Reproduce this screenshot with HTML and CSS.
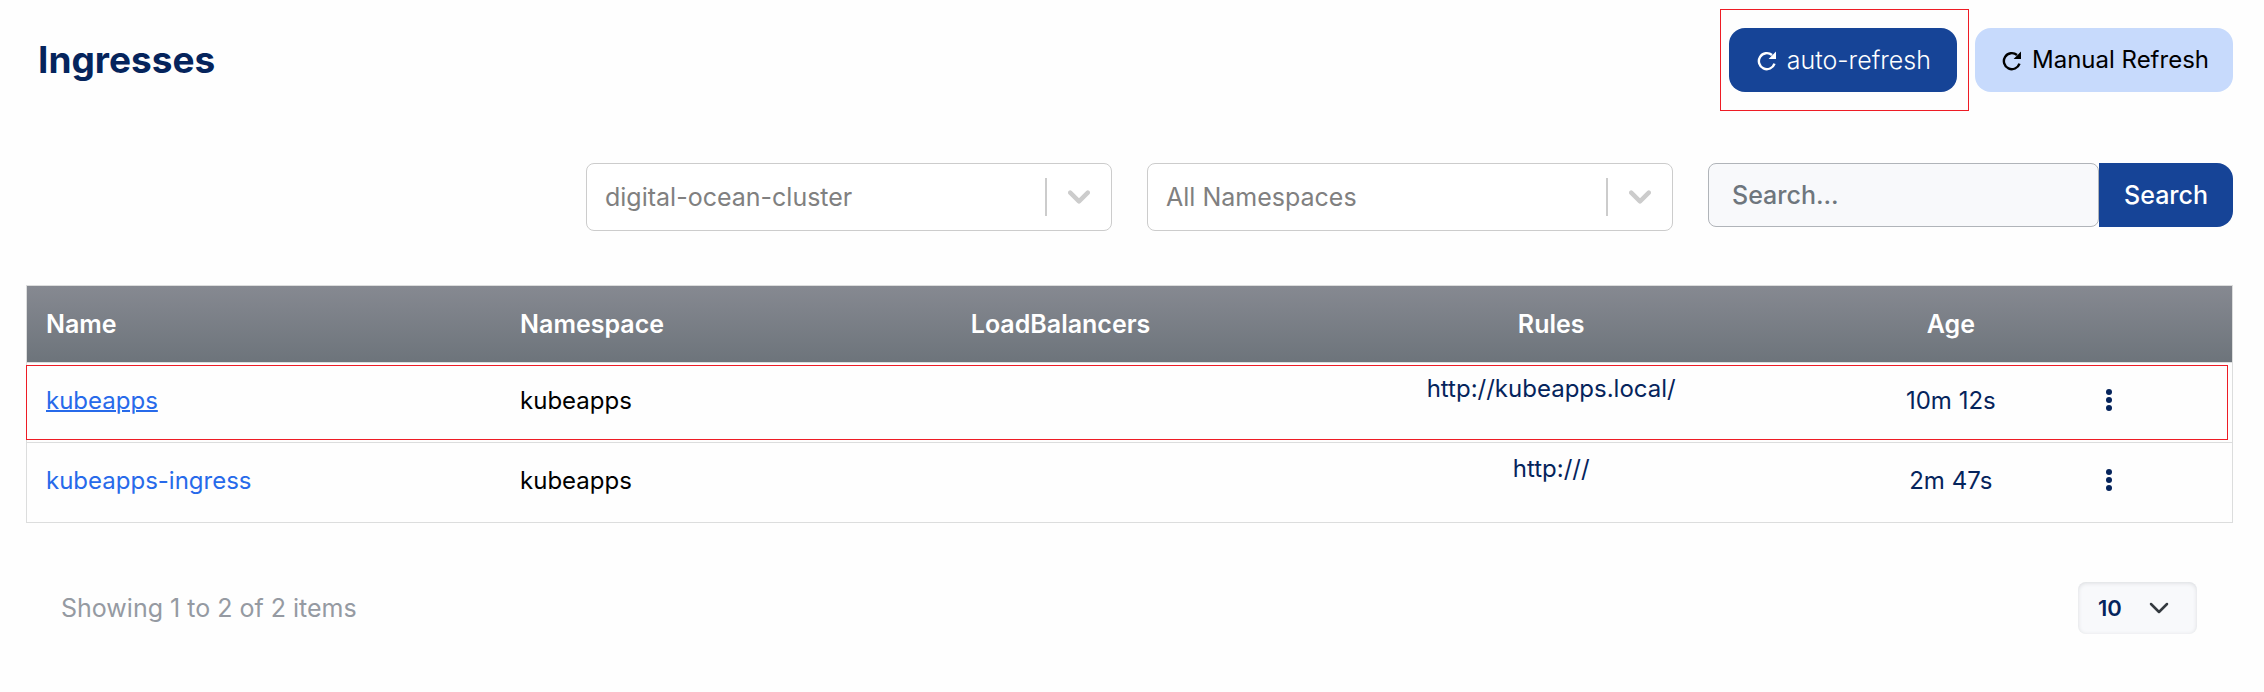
FILE: index.html
```html
<!DOCTYPE html>
<html lang="en">
<head>
<meta charset="utf-8">
<meta name="viewport" content="width=device-width, initial-scale=1">
<title>Ingresses</title>
<link rel="stylesheet" href="styles.css">
</head>
<body>
<svg class="sprite" aria-hidden="true">
  <symbol id="icon-refresh" viewBox="0 0 20 20">
    <path d="M17.5 12.6A8 8 0 1 1 15 4" fill="none" stroke="currentColor" stroke-width="2.4"/>
    <path d="M19 .6V8h-7.4z" fill="currentColor"/>
  </symbol>
  <symbol id="icon-chevron" viewBox="0 0 20 12">
    <path d="M2 2l8 8 8-8" fill="none" stroke="currentColor" stroke-linecap="round" stroke-linejoin="round"/>
  </symbol>
  <symbol id="icon-dots" viewBox="0 0 24 24">
    <circle cx="12" cy="3" r="3"/><circle cx="12" cy="11" r="3"/><circle cx="12" cy="19" r="3"/>
  </symbol>
</svg>
<main class="page">
  <header class="page-header">
    <h1 class="title">Ingresses</h1>
    <div class="actions">
      <div class="highlight-box">
        <button class="btn btn-primary" type="button"><svg class="refresh"><use href="#icon-refresh"/></svg>auto-refresh</button>
      </div>
      <button class="btn btn-light" type="button"><svg class="refresh"><use href="#icon-refresh"/></svg>Manual Refresh</button>
    </div>
  </header>

  <form class="filters">
    <div class="picker">
      <select class="picker-select" aria-label="Cluster"><option>digital-ocean-cluster</option></select>
      <span class="picker-arrow"><svg class="chevron-thick"><use href="#icon-chevron"/></svg></span>
    </div>
    <div class="picker">
      <select class="picker-select" aria-label="Namespace"><option>All Namespaces</option></select>
      <span class="picker-arrow"><svg class="chevron-thick"><use href="#icon-chevron"/></svg></span>
    </div>
    <div class="search">
      <input class="search-input" type="text" placeholder="Search..." aria-label="Search">
      <button class="search-btn" type="button">Search</button>
    </div>
  </form>

  <table class="table">
    <colgroup>
      <col class="col-name"><col class="col-namespace"><col class="col-lb"><col class="col-rules"><col class="col-age"><col>
    </colgroup>
    <thead>
      <tr><th>Name</th><th>Namespace</th><th class="center">LoadBalancers</th><th class="center">Rules</th><th class="center">Age</th><th></th></tr>
    </thead>
    <tbody>
      <tr class="row-marked">
        <td><a class="link link-active" href="#">kubeapps</a></td>
        <td>kubeapps</td>
        <td></td>
        <td class="center navy rules">http://kubeapps.local/</td>
        <td class="center navy">10m 12s</td>
        <td><button class="menu-btn" type="button" aria-label="Actions"><svg class="dots"><use href="#icon-dots"/></svg></button></td>
      </tr>
      <tr>
        <td><a class="link" href="#">kubeapps-ingress</a></td>
        <td>kubeapps</td>
        <td></td>
        <td class="center navy rules">http:///</td>
        <td class="center navy">2m 47s</td>
        <td><button class="menu-btn" type="button" aria-label="Actions"><svg class="dots"><use href="#icon-dots"/></svg></button></td>
      </tr>
    </tbody>
  </table>

  <footer class="pagination">
    <p class="summary">Showing 1 to 2 of 2 items</p>
    <div class="page-size">
      <select class="page-size-select" aria-label="Items per page"><option>10</option></select>
      <svg class="chevron-thin"><use href="#icon-chevron"/></svg>
    </div>
  </footer>
</main>
</body>
</html>
```
FILE: styles.css
```css
* {
  box-sizing: border-box;
}

body {
  margin: 0;
  background: #fefefe;
  color: #000;
  font-family: Inter, "Liberation Sans", sans-serif;
  font-size: 25px;
  line-height: 36px;
}

button,
input,
select {
  margin: 0;
  font: inherit;
}

.sprite {
  position: absolute;
  width: 0;
  height: 0;
}

.page {
  padding: 9px 31px 40px 26px;
}

.page-header {
  display: flex;
  align-items: center;
  justify-content: space-between;
  padding-left: 12px;
}

.title {
  margin: 0;
  color: #05245c;
  font-size: 37px;
  font-weight: 700;
  line-height: 44px;
}

.actions {
  display: flex;
  align-items: center;
  gap: 6px;
}

.highlight-box {
  padding: 18px 11px 18px 8px;
  border: 1px solid #ee1c25;
}

.btn {
  display: flex;
  align-items: center;
  gap: 10px;
  height: 64px;
  padding: 0 24px 0 27px;
  border: 0;
  border-radius: 16px;
}

.btn-primary {
  padding: 0 26px 0 28px;
  background: #164497;
  color: #fff;
  font-weight: 300;
}

.btn-light {
  background: #c7dafc;
  color: #000;
  font-size: 24px;
}

.refresh {
  width: 20px;
  height: 20px;
  margin-top: 2px;
}

.filters {
  display: flex;
  align-items: flex-start;
  justify-content: flex-end;
  gap: 35px;
  margin-top: 52px;
}

.picker {
  position: relative;
  flex: 0 1 526px;
}

.picker-select {
  display: block;
  width: 100%;
  height: 68px;
  padding: 0 84px 0 18px;
  border: 1px solid #ccc;
  border-radius: 8px;
  background: #fff;
  color: #808080;
  appearance: none;
}

.picker-arrow {
  position: absolute;
  top: 15px;
  right: 1px;
  bottom: 15px;
  display: flex;
  align-items: center;
  justify-content: center;
  width: 66px;
  border-left: 2px solid #ccc;
  color: #ccc;
  pointer-events: none;
}

.chevron-thick {
  width: 22px;
  height: 14px;
  stroke-width: 4px;
}

.search {
  display: flex;
  flex: 0 1 525px;
  min-width: 0;
}

.search-input {
  flex: 1;
  min-width: 0;
  height: 64px;
  padding: 0 23px;
  border: 1px solid #b0b4b9;
  border-radius: 8px;
  background: #f8f9fb;
  color: #6e767d;
  font-weight: 500;
}

.search-input::placeholder {
  color: #6e767d;
  opacity: 1;
}

.search-btn {
  height: 64px;
  padding: 0 25px;
  border: 0;
  border-radius: 0 16px 16px 0;
  background: #164497;
  color: #fff;
  font-weight: 500;
}

.table {
  width: 100%;
  margin-top: 54px;
  border: 1px solid #dcdddd;
  border-collapse: separate;
  border-spacing: 0;
  table-layout: fixed;
}

.col-name { width: 21.5%; }
.col-namespace { width: 15.5%; }
.col-lb { width: 19.75%; }
.col-rules { width: 24.75%; }
.col-age { width: 11.5%; }

.table th {
  height: 76px;
  padding: 0 19px;
  color: #fff;
  font-weight: 600;
  text-align: left;
}

.table thead tr {
  background: linear-gradient(#868991, #6d747b);
}

.table td {
  height: 80px;
  padding: 0 19px 4px;
  border-top: 1px solid #dcdddd;
  font-size: 24px;
}

.table .center {
  text-align: center;
}

.table .navy {
  color: #05245c;
}

.table .rules {
  padding-bottom: 28px;
}

.row-marked {
  position: relative;
}

.row-marked td:first-child::after {
  content: "";
  position: absolute;
  inset: 3px 4px 2px -1px;
  border: 1px solid #ee1c25;
  pointer-events: none;
}

.link {
  color: #276aea;
  text-decoration: none;
}

.link-active {
  text-decoration: underline 2px;
}

.menu-btn {
  display: block;
  padding: 0;
  border: 0;
  background: none;
  color: #05245c;
}

.dots {
  display: block;
  width: 24px;
  height: 24px;
  fill: currentColor;
}

.pagination {
  display: flex;
  align-items: center;
  justify-content: space-between;
  margin-top: 59px;
  padding: 0 36px 0 35px;
}

.summary {
  margin: 0;
  color: #959aa2;
}

.page-size {
  position: relative;
}

.page-size-select {
  display: block;
  width: 119px;
  height: 52px;
  padding: 0 20px;
  border: 0;
  border-radius: 8px;
  background: #f8f9fb;
  box-shadow: inset 0 1px 4px #d9dbde;
  color: #05245c;
  font-size: 22px;
  font-weight: 600;
  appearance: none;
}

.chevron-thin {
  position: absolute;
  top: 20px;
  right: 28px;
  width: 20px;
  height: 12px;
  color: #343a40;
  stroke-width: 2.5px;
  pointer-events: none;
}
```
